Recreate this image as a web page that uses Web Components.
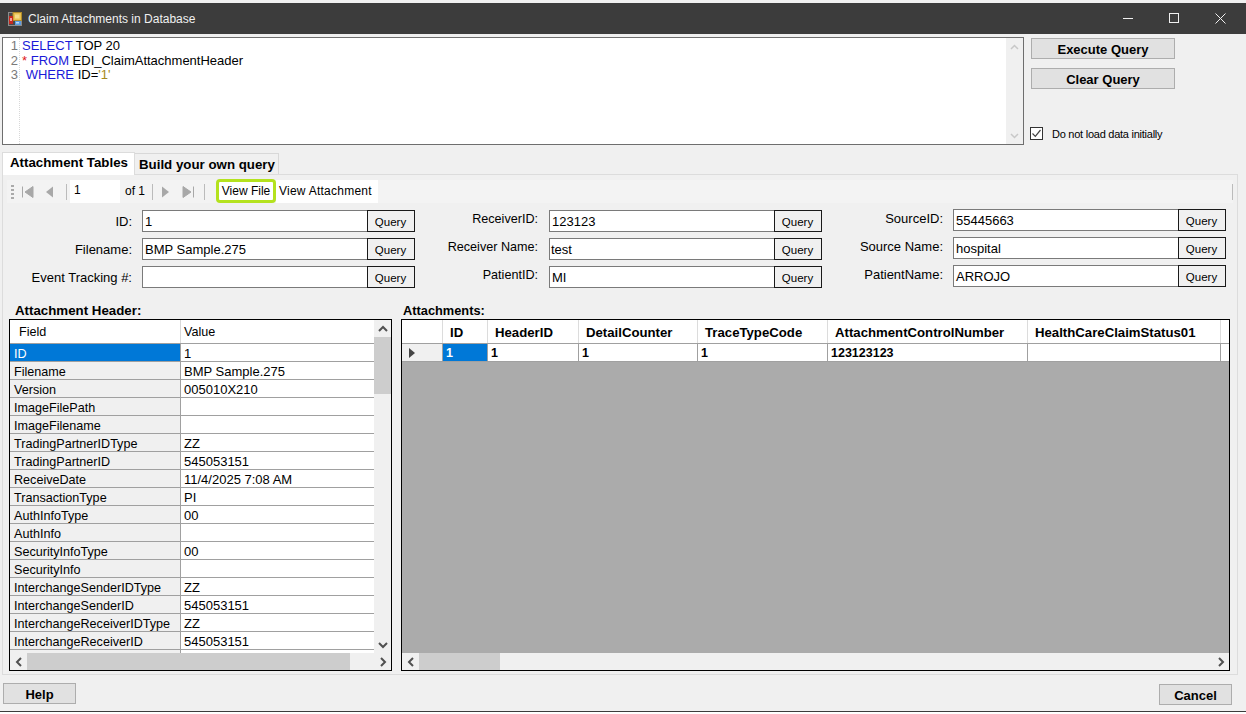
<!DOCTYPE html>
<html><head><meta charset="utf-8"><style>
html,body{margin:0;padding:0;background:#fff;font:12px "Liberation Sans",Arial,sans-serif;color:#000;overflow:hidden}
</style></head><body>
<app-window></app-window>
<script>
const FONT='"Liberation Sans",Arial,sans-serif';
class Base extends HTMLElement{
  constructor(){super();this.attachShadow({mode:'open'})}
  set html(v){this.shadowRoot.innerHTML=v}
}
class TitleBar extends Base{connectedCallback(){this.html=`<style>
:host{display:flex;align-items:center;height:31px;background:#3c3c3c;color:#f0f0f0;font:12px ${FONT};margin-top:3px;flex:none}
svg{display:block}.ic{margin-left:8px;margin-right:6px}
.t{flex:1}
.b{width:46px;height:31px;display:flex;align-items:center;justify-content:center}
.w{display:flex;margin-right:3px}
</style>
<svg class="ic" width="14" height="14" viewBox="0 0 14 14"><rect width="14" height="14" fill="#8c8c8c"/><rect x="1" y="1" width="12" height="12" fill="#4a4a4a"/><rect x="5" y="0.5" width="8.5" height="8" fill="#e8c050" stroke="#b08a28"/><rect x="7" y="2.5" width="4.5" height="4" fill="#f6dd8a"/><rect x="1" y="4" width="4" height="8" fill="#c8281e"/><rect x="2" y="6" width="2" height="3" fill="#f0a0a0"/><rect x="7" y="9" width="6" height="4" fill="#5a9ae0"/><rect x="8" y="10" width="3" height="1.5" fill="#bcdcf8"/></svg>
<span class="t">Claim Attachments in Database</span>
<div class="w">
<div class="b"><svg width="11" height="11"><path d="M0 5.5H10" stroke="#f0f0f0" stroke-width="1"/></svg></div>
<div class="b"><svg width="11" height="11"><rect x=".5" y=".5" width="9" height="9" fill="none" stroke="#f0f0f0"/></svg></div>
<div class="b"><svg width="11" height="11"><path d="M.5 .5L10.5 10.5M10.5 .5L.5 10.5" stroke="#f0f0f0"/></svg></div>
</div>`}}
class WinBtn extends Base{connectedCallback(){const w=this.getAttribute('w')||144;this.html=`<style>
:host{display:block;box-sizing:border-box;width:${w}px;height:21px;background:#e1e1e1;border:1px solid #adadad;font:bold 13px ${FONT};color:#000;text-align:center;line-height:21px;flex:none}
</style><slot></slot>`}}
class SqlEditor extends Base{connectedCallback(){this.html=`<style>
:host{display:flex;box-sizing:border-box;width:1022px;height:108px;border:1px solid #6e6e6e;background:#fff;font:13px/15px ${FONT};flex:none}
.g{width:17px;box-sizing:border-box;text-align:right;color:#7a7a7a;border-right:1px dotted #d8d8d8;padding-right:1px;flex:none}
.c{flex:1;padding:0 0 0 2px;white-space:pre}
.g div,.c div{height:15px}
.g div:nth-child(2),.c div:nth-child(2){height:14px}
.k{color:#1a1ad8}.r{color:#e01818}.s{color:#a68a20}
.sb{width:17px;background:#f0f0f0;display:flex;flex-direction:column;justify-content:space-between;align-items:center;padding:6px 0 5px;box-sizing:border-box}
</style><div class="g"><div>1</div><div>2</div><div>3</div></div>
<div class="c"><div><span class="k">SELECT</span> TOP 20</div><div><span class="r">*</span> <span class="k">FROM</span> EDI_ClaimAttachmentHeader</div><div> <span class="k">WHERE</span> ID=<span class="s">'1'</span></div></div>
<div class="sb"><svg width="9" height="6"><path d="M1 5L4.5 1.5L8 5" fill="none" stroke="#c8c8c8" stroke-width="1.5"/></svg><svg width="9" height="6"><path d="M1 1L4.5 4.5L8 1" fill="none" stroke="#c8c8c8" stroke-width="1.5"/></svg></div>`}}
class CheckOpt extends Base{connectedCallback(){this.html=`<style>
:host{display:flex;align-items:center;font:11px ${FONT};letter-spacing:-.25px;margin-left:-1px}
.b{width:11px;height:11px;border:1px solid #333;background:#fff;margin-right:9px;display:block;flex:none}
</style><svg class="b" viewBox="0 0 11 11"><path d="M1.5 5.5L4.3 8.3L9.5 2" fill="none" stroke="#444" stroke-width="1.2"/></svg><slot></slot>`}}
class TabStrip extends Base{connectedCallback(){this.html=`<style>
:host{display:flex;align-items:flex-end;height:23px;padding-left:2px;font:bold 13.3px ${FONT};flex:none;margin-top:7px}
.t{box-sizing:border-box;display:flex;align-items:center;white-space:nowrap}
.a{width:133px;height:23px;background:#fff;border:1px solid #dcdcdc;border-bottom:0;padding:0 0 3px 7px;position:relative;z-index:1}
.i{width:144px;height:21px;background:#f0f0f0;border:1px solid #d8d8d8;border-bottom:0;border-left:0;padding-left:4px;margin-bottom:1px}
</style><div class="t a">Attachment Tables</div><div class="t i">Build your own query</div>`}}
const nav={
 first:'<path d="M1.5 1.5V12.5M12 1.5V12.5L4 7Z" fill="#a8a8a8" stroke="#a8a8a8"/>',
 prev:'<path d="M10 1.5V12.5L3 7Z" fill="#a8a8a8"/>',
 next:'<path d="M4 1.5V12.5L11 7Z" fill="#a8a8a8"/>',
 last:'<path d="M12.5 1.5V12.5M2 1.5V12.5L10 7Z" fill="#a8a8a8" stroke="#a8a8a8"/>'};
class NavBar extends Base{connectedCallback(){
 const ic=(n,m)=>`<svg style="margin-left:${m}px;flex:none" width="14" height="14" viewBox="0 0 14 14">${nav[n]}</svg>`;
 const sep=m=>`<i style="display:block;width:1px;height:16px;background:#bbb;margin-left:${m}px;flex:none"></i>`;
 this.html=`<style>
:host{display:flex;align-items:center;height:23px;box-sizing:border-box;background:#f3f3f3;font:12px ${FONT};margin:5px 4px 0 4px;flex:none}
.grip{width:3px;height:14px;margin-left:4px;background:repeating-linear-gradient(#aaa 0 2px,transparent 2px 4px);flex:none}
.pos{width:50px;height:23px;background:#fff;box-sizing:border-box;padding:2px 0 0 4px;margin-left:3px;line-height:16px;flex:none}
.of{margin-left:5px;padding-bottom:2px;flex:none}
.vf{box-sizing:border-box;height:24px;width:60px;margin:-1px 0 0 10px;border:3px solid #b4e21e;border-radius:4px;display:flex;align-items:center;justify-content:center;background:#fff;white-space:nowrap;flex:none}
.va{background:#fff;height:23px;line-height:22px;padding:0 6px 0 3px;white-space:nowrap;flex:none;letter-spacing:.02em}
.end{margin-left:auto;width:1px;height:16px;background:#bbb}
</style><div class="grip"></div>${ic('first',7)}${ic('prev',8)}${sep(9)}<div class="pos">1</div><span class="of">of 1</span>${sep(7)}${ic('next',5)}${ic('last',9)}${sep(9)}<div class="vf" style="margin-left:11px">View File</div><div class="va">View Attachment</div><div class="end"></div>`}}
class QField extends Base{connectedCallback(){const lw=this.getAttribute('lw'),dy=this.getAttribute('dy')||0,pad=this.getAttribute('pad')||2,m=this.getAttribute('m')||10,fs=this.getAttribute('fs')||13;this.html=`<style>
:host{display:flex;align-items:center;height:22px;font:13px ${FONT}}
.l{width:${lw}px;text-align:right;margin-right:${m}px;white-space:nowrap;flex:none;transform:translateY(${dy}px);font-size:${fs}px}
.i{box-sizing:border-box;width:225px;height:22px;background:#fff;border:1px solid #7a7a7a;border-right:0;padding:3px 0 0 ${pad}px;line-height:15px;flex:none}
.b{box-sizing:border-box;width:48px;height:22px;border:1px solid #1a1a1a;background:#f0f0f0;font-size:11.5px;text-align:center;line-height:21px;padding:1px 1px 0 0;flex:none}
</style><span class="l"><slot name="label"></slot></span><div class="i"><slot></slot></div><div class="b">Query</div>`}}
const arrow={u:'M1 6L5 2L9 6',d:'M1 2L5 6L9 2',l:'M6 1L2 5L6 9',r:'M2 1L6 5L2 9'};
function arr(d,color='#505050'){const w=(d=='u'||d=='d')?10:8,h=(d=='u'||d=='d')?8:10;return `<svg width="${w}" height="${h}" style="display:block"><path d="${arrow[d]}" fill="none" stroke="${color}" stroke-width="2"/></svg>`}
class ScrollBar extends Base{connectedCallback(){
 const v=this.hasAttribute('vertical');const before=+this.getAttribute('before');const thumb=+this.getAttribute('thumb');
 const len=this.getAttribute('len');
 this.html=`<style>
:host{display:flex;flex-direction:${v?'column':'row'};background:#f0f0f0;flex:none;${v?`width:17px;height:${len}px`:`height:17px;width:${len}px`}}
.a{${v?'height:17px':'width:17px'};display:flex;align-items:center;justify-content:center;flex:none}
.tr{flex:1;display:flex;flex-direction:${v?'column':'row'}}
.th{background:#cdcdcd;${v?`margin-top:${before}px;height:${thumb}px`:`margin-left:${before}px;width:${thumb}px`}}
</style><div class="a">${arr(v?'u':'l')}</div><div class="tr"><div class="th"></div></div><div class="a">${arr(v?'d':'r')}</div>`}}
const props=[['ID','1'],['Filename','BMP Sample.275'],['Version','005010X210'],['ImageFilePath',''],['ImageFilename',''],['TradingPartnerIDType','ZZ'],['TradingPartnerID','545053151'],['ReceiveDate','11/4/2025 7:08 AM'],['TransactionType','PI'],['AuthInfoType','00'],['AuthInfo',''],['SecurityInfoType','00'],['SecurityInfo',''],['InterchangeSenderIDType','ZZ'],['InterchangeSenderID','545053151'],['InterchangeReceiverIDType','ZZ'],['InterchangeReceiverID','545053151'],['','']];
class HeaderGrid extends Base{connectedCallback(){
 const rows=props.map(([f,v],i)=>`<div class="r"><div class="f${i==0?' sel':''}">${f}</div><div class="v">${v}</div></div>`).join('');
 this.html=`<style>
:host{display:block;box-sizing:border-box;width:383px;height:352px;border:1px solid #000;background:#f0f0f0;font:12.6px ${FONT};flex:none}
.top{display:flex;height:333px}
.body{width:364px;height:333px;overflow:hidden;background:#fff;flex:none}
.h{display:flex;height:24px;box-sizing:border-box;border-bottom:1px solid #a0a0a0;line-height:25px}
.h div:first-child{width:171px;box-sizing:border-box;border-right:1px solid #d8d8d8;padding-left:9px}
.h div:last-child{padding-left:3px}
.r{display:flex;height:18px;box-sizing:border-box;border-bottom:1px solid #a0a0a0;line-height:19px}
.f{width:171px;box-sizing:border-box;background:#f0f0f0;border-right:1px solid #a0a0a0;padding:1px 0 0 4px;line-height:18px;white-space:nowrap;flex:none;overflow:hidden}
.sel{background:#0078d7;color:#fff}
.v{padding-left:3px;background:#fff;flex:1;font-size:13px;overflow:hidden}
</style><div class="top"><div class="body"><div class="h"><div>Field</div><div>Value</div></div>${rows}</div><scroll-bar vertical before="0" thumb="57" len="333"></scroll-bar></div><scroll-bar before="0" thumb="323" len="381"></scroll-bar>`}}
const cols=[['',41],['ID',45],['HeaderID',91],['DetailCounter',119],['TraceTypeCode',130],['AttachmentControlNumber',200],['HealthCareClaimStatus01',193],['',30]];
const vals=['','1','1','1','1','123123123','',''];
class DataGrid extends Base{connectedCallback(){
 const hc=cols.map(([t,w])=>`<div class="c" style="width:${w}px">${t}</div>`).join('');
 const rc=cols.map(([t,w],i)=>i==0?`<div class="d rh" style="width:${w}px"><svg width="6" height="10"><path d="M0 0V10L6 5Z" fill="#444"/></svg></div>`:`<div class="d${i==1?' sel':''}" style="width:${w}px">${vals[i]}</div>`).join('');
 this.html=`<style>
:host{display:flex;flex-direction:column;box-sizing:border-box;width:829px;height:352px;border:1px solid #000;background:#ababab;font:bold 12px ${FONT};flex:none;overflow:hidden}
.row{display:flex;background:#fff;flex:none;white-space:nowrap}
.head{height:24px;border-bottom:1px solid #a0a0a0;box-sizing:border-box;font-size:13.2px;line-height:25px}
.c{box-sizing:border-box;padding-left:7px;border-right:1px solid #dcdcdc;flex:none}
.body{height:18px;box-sizing:border-box;border-bottom:1px solid #a0a0a0;line-height:19px}
.d{box-sizing:border-box;padding-left:3px;border-right:1px solid #a0a0a0;flex:none;height:17px;overflow:hidden;font-size:12.5px}
.rh{background:#f0f0f0;display:flex;align-items:center;padding-left:7px}
.sel{background:#0078d7;color:#fff}
.fill{flex:1}
</style><div class="row head">${hc}</div><div class="row body">${rc}</div><div class="fill"></div><scroll-bar before="0" thumb="81" len="827"></scroll-bar>`}}
class AppWindow extends Base{connectedCallback(){
 const f=(lab,val,lw,dy,pad,m,fs)=>`<q-field lw="${lw}" dy="${dy}" pad="${pad||2}" m="${m||10}" fs="${fs||13}"><span slot="label">${lab}</span>${val}</q-field>`;
 this.html=`<style>
:host{display:flex;flex-direction:column;box-sizing:border-box;height:712px;width:1246px;background:#f0f0f0;border-bottom:1px solid #3c3c3c;font:12px ${FONT};overflow:hidden}
.top{display:flex;padding:3px 0 0 2px;height:108px;flex:none}
.side{margin-left:7px;width:200px;display:flex;flex-direction:column;padding-top:1px}
.side win-btn+win-btn{margin-top:9px}
.side check-opt{margin-top:38px}
.panel{box-sizing:border-box;width:1236px;margin:-1px 0 0 2px;height:501px;background:#f0f0f0;border:1px solid #dcdcdc;display:flex;flex-direction:column;flex:none}
.form{display:flex;padding-top:7px}
.col{display:flex;flex-direction:column;gap:6px;flex:none}
.c1{width:411px}.c2{width:411px}.c3{margin-top:-1px}
.gh{display:flex;margin-top:13px;font:bold 13px ${FONT};height:18px;align-items:center;flex:none}
.gh span:first-child{margin-left:12px;width:388px;font-size:13.3px}
.gh span:last-child{font-size:12.8px}
.grids{display:flex;margin-left:6px;gap:9px;flex:none}
.foot{display:flex;justify-content:space-between;padding:8px 14px 0 3px;flex:none}
.foot win-btn:last-child{margin-top:1px}
</style>
<title-bar></title-bar>
<div class="top"><sql-editor></sql-editor><div class="side"><win-btn>Execute Query</win-btn><win-btn>Clear Query</win-btn><check-opt>Do not load data initially</check-opt></div></div>
<tab-strip></tab-strip>
<div class="panel">
<nav-bar></nav-bar>
<div class="form">
<div class="col c1">${f('ID:','1',129,0)}${f('Filename:','BMP Sample.275',129,0)}${f('Event Tracking #:','',129,0)}</div>
<div class="col c2">${f('ReceiverID:','123123',124,-2,2,11,12.6)}${f('Receiver Name:','test',124,-2,1,11,12.6)}${f('PatientID:','MI',124,-2,2,11,12.6)}</div>
<div class="col c3">${f('SourceID:','55445663',118,-2,2)}${f('Source Name:','hospital',118,-2,2)}${f('PatientName:','ARROJO',118,-2,2)}</div>
</div>
<div class="gh"><span>Attachment Header:</span><span>Attachments:</span></div>
<div class="grids"><header-grid></header-grid><data-grid></data-grid></div>
</div>
<div class="foot"><win-btn w="73">Help</win-btn><win-btn w="73">Cancel</win-btn></div>`}}
Object.entries({'title-bar':TitleBar,'win-btn':WinBtn,'sql-editor':SqlEditor,'check-opt':CheckOpt,'tab-strip':TabStrip,'nav-bar':NavBar,'q-field':QField,'scroll-bar':ScrollBar,'header-grid':HeaderGrid,'data-grid':DataGrid,'app-window':AppWindow}).forEach(([n,c])=>customElements.define(n,c));
</script></body></html>
